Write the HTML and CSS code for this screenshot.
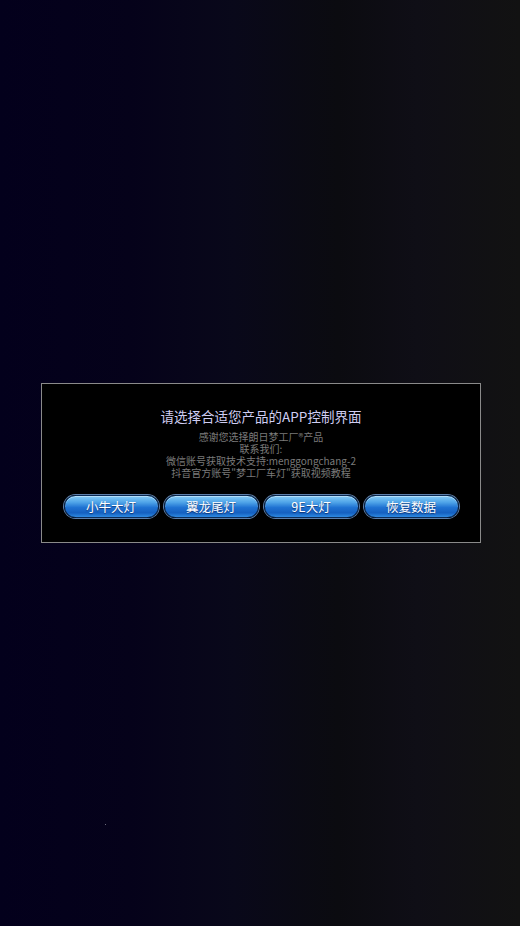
FILE: index.html
```html
<!DOCTYPE html>
<html lang="zh">
<head>
<meta charset="utf-8">
<link rel="stylesheet" href="styles.css">
</head>
<body>
<div class="screen">
  <div class="dialog">
    <div class="title">请选择合适您产品的APP控制界面</div>
    <div class="info">
      <div>感谢您选择朗日梦工厂®产品</div>
      <div>联系我们:</div>
      <div>微信账号获取技术支持:menggongchang-2</div>
      <div>抖音官方账号"梦工厂车灯"获取视频教程</div>
    </div>
    <div class="buttons">
      <button class="btn">小牛大灯</button>
      <button class="btn">翼龙尾灯</button>
      <button class="btn">9E大灯</button>
      <button class="btn">恢复数据</button>
    </div>
  </div>
  <span class="dot"></span>
</div>
</body>
</html>
```
FILE: styles.css
```css
html, body {
  margin: 0;
  padding: 0;
}
body {
  width: 520px;
  height: 926px;
  overflow: hidden;
  font-family: "Noto Sans CJK SC", "Liberation Sans", sans-serif;
}
.screen {
  position: relative;
  width: 520px;
  height: 926px;
  background: linear-gradient(to right, #03001c 0%, #05021a 25%, #09081a 45%, #0b0b10 65%, #0f0e16 80%, #121212 100%);
  display: flex;
  align-items: center;
  justify-content: center;
}
.dialog {
  box-sizing: border-box;
  width: 440px;
  height: 160px;
  margin-left: 2px;
  background: #000;
  border: 1px solid #8a8a8a;
  display: flex;
  flex-direction: column;
  align-items: center;
  padding-top: 23px;
}
.title {
  font-size: 13.5px;
  line-height: 18px;
  color: #cfcdf2;
}
.info {
  margin-top: 6px;
  font-size: 10px;
  line-height: 12px;
  color: #7a7a7a;
  text-align: center;
}
.buttons {
  margin-top: 16px;
  display: flex;
  gap: 5px;
}
.btn {
  box-sizing: border-box;
  width: 95px;
  height: 23px;
  padding: 0;
  border-radius: 12px;
  border: 1px solid #0a2a55;
  box-shadow: 0 0 0 1px #5d7ea8, inset 0 1px 0 rgba(255,255,255,0.4);
  background: linear-gradient(to bottom, #86ccf6 0%, #4fa4e8 30%, #1f72d2 55%, #1560c0 80%, #2e8ae2 100%);
  color: #ffffff;
  font-family: "Noto Sans CJK SC", "Liberation Sans", sans-serif;
  font-size: 12.5px;
  line-height: 21px;
  text-shadow: 0 1px 1px rgba(0,0,40,0.5);
}
.dot {
  position: absolute;
  left: 105px;
  top: 824px;
  width: 1px;
  height: 1px;
  background: #6a6a7a;
}
```
